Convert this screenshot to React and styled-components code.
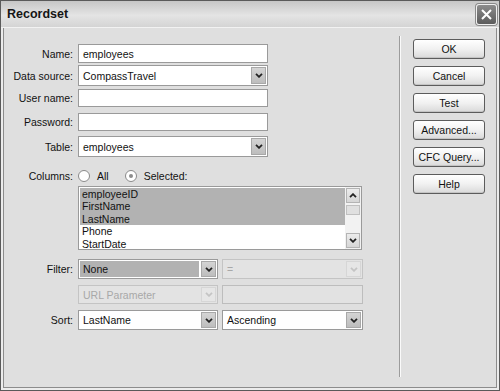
import React from 'react';
import styled, { createGlobalStyle } from 'styled-components';

const Global = createGlobalStyle`
  html, body {
    margin: 0;
    padding: 0;
    background: #fff;
  }
  body {
    font-family: "Liberation Sans", Arial, sans-serif;
    font-size: 10.5px;
    color: #111;
  }
  * { box-sizing: border-box; }
`;

const Window = styled.div`
  width: 500px;
  height: 391px;
  border: 1px solid #5a5a5a;
  display: flex;
  flex-direction: column;
  background: #dfdfdf;
  overflow: hidden;
`;

const TitleBar = styled.div`
  height: 27px;
  flex: none;
  display: flex;
  align-items: center;
  justify-content: space-between;
  padding: 0 2px 0 6px;
  background: linear-gradient(#c6c6c6, #e4e4e4 55%, #d4d4d4);
  border-bottom: 1px solid #f2f2f2;
`;

const Title = styled.div`
  font-weight: bold;
  font-size: 12.5px;
  color: #151515;
`;

const CloseButton = styled.div`
  width: 21px;
  height: 21px;
  border-radius: 3px;
  border: 1px solid #f0f0f0;
  box-shadow: 0 0 0 1px #8a8a8a;
  background: linear-gradient(#8c8c8c, #5c5c5c);
  display: flex;
  align-items: center;
  justify-content: center;
`;

const Frame = styled.div`
  flex: 1;
  display: flex;
  border: solid #ececec;
  border-width: 0 2px 2px;
  box-shadow: inset 1px 0 #8c8c8c, inset -1px 0 #8c8c8c, inset 0 -1px #8c8c8c;
  padding-left: 5px;
`;

const Form = styled.div`
  width: 355px;
  display: flex;
  flex-direction: column;
  padding-top: 16px;
`;

const Row = styled.div`
  display: flex;
  align-items: ${p => (p.$top ? 'flex-start' : 'center')};
  gap: 5px;
  height: ${p => p.$h}px;
  margin-top: ${p => p.$mt || 0}px;
`;

const Label = styled.div`
  width: 65px;
  flex: none;
  text-align: right;
  white-space: nowrap;
`;

const Controls = styled.div`
  display: flex;
  gap: 4px;
  height: 100%;
`;

const Field = styled.div`
  width: ${p => p.$w}px;
  height: 100%;
  border: 1px solid ${p => (p.$disabled ? '#bdbdbd' : '#9a9a9a')};
  background: ${p => (p.$disabled ? '#e2e2e2' : '#fff')};
  display: flex;
  align-items: center;
  padding: 0 4px;
`;

const SelectBox = styled.div`
  width: ${p => p.$w}px;
  height: 100%;
  display: flex;
  border: 1px solid ${p => (p.$disabled ? '#c4c4c4' : '#9a9a9a')};
  background: ${p => (p.$disabled ? '#e3e3e3' : '#fff')};
  color: ${p => (p.$disabled ? '#a8a8a8' : '#111')};
`;

const SelectText = styled.div`
  flex: 1;
  display: flex;
  align-items: center;
  padding: 0 3px;
  margin: 1px;
  background: ${p => (p.$selected ? '#b2b2b2' : 'transparent')};
`;

const SelectButton = styled.div`
  width: 15px;
  margin: 1px;
  flex: none;
  display: flex;
  align-items: center;
  justify-content: center;
  border: 1px solid ${p => (p.$disabled ? '#d6d6d6' : '#a8a8a8')};
  background: ${p => (p.$disabled ? '#e6e6e6' : 'linear-gradient(#d4d4d4, #bdbdbd)')};
  color: ${p => (p.$disabled ? '#c4c4c4' : '#222')};
`;

const RadioGroup = styled.div`
  display: flex;
  align-items: center;
  gap: 16px;
`;

const Option = styled.div`
  display: flex;
  align-items: center;
  gap: 7px;
`;

const Radio = styled.div`
  width: 12px;
  height: 12px;
  border-radius: 50%;
  border: 1px solid #8a8a8a;
  background: #fff;
  display: flex;
  align-items: center;
  justify-content: center;
  &::after {
    content: '';
    display: ${p => (p.$checked ? 'block' : 'none')};
    width: 4px;
    height: 4px;
    border-radius: 50%;
    background: #8c8c8c;
  }
`;

const ListBox = styled.div`
  width: 284px;
  height: 64px;
  margin-left: 70px;
  margin-top: 2px;
  border: 1px solid #9a9a9a;
  background: #fff;
  display: flex;
`;

const Items = styled.div`
  flex: 1;
  padding: 1px 0 0 1px;
`;

const Item = styled.div`
  height: 12.4px;
  line-height: 12.4px;
  padding-left: 2px;
  background: ${p => (p.$selected ? '#b2b2b2' : 'transparent')};
`;

const ScrollBar = styled.div`
  width: 16px;
  display: flex;
  flex-direction: column;
  background: #f2f2f2;
  padding: 1px;
`;

const ScrollArrow = styled.div`
  height: 15px;
  border: 1px solid #b4b4b4;
  background: linear-gradient(#ececec, #d6d6d6);
  display: flex;
  align-items: center;
  justify-content: center;
  color: #222;
`;

const Thumb = styled.div`
  height: 10px;
  margin-top: 2px;
  border: 1px solid #c0c0c0;
  background: #e0e0e0;
`;

const Track = styled.div`
  flex: 1;
`;

const Separator = styled.div`
  width: 2px;
  border-left: 1px solid #9c9c9c;
  border-right: 1px solid #fafafa;
  margin: 8px 0 11px 36px;
`;

const ButtonColumn = styled.div`
  margin-left: 12px;
  padding-top: 11px;
  display: flex;
  flex-direction: column;
  gap: 7px;
`;

const Button = styled.div`
  width: 72px;
  height: 20px;
  border: 1px solid #5c5c5c;
  border-radius: 3px;
  background: linear-gradient(#ffffff, #f1f1f1 50%, #d9d9d9);
  box-shadow: inset 0 -1px #c4c4c4;
  display: flex;
  align-items: center;
  justify-content: center;
`;

const Chevron = ({ up }) => (
  <svg width="8" height="5" viewBox="0 0 8 5">
    <polyline
      points={up ? '1,4.2 4,1.2 7,4.2' : '1,0.8 4,3.8 7,0.8'}
      fill="none"
      stroke="currentColor"
      strokeWidth="1.8"
    />
  </svg>
);

const Select = ({ w, value, disabled, selected }) => (
  <SelectBox $w={w} $disabled={disabled}>
    <SelectText $selected={selected}>{value}</SelectText>
    <SelectButton $disabled={disabled}>
      <Chevron />
    </SelectButton>
  </SelectBox>
);

const columns = [
  ['employeeID', true],
  ['FirstName', true],
  ['LastName', true],
  ['Phone', false],
  ['StartDate', false],
];

export default function App() {
  return (
    <>
      <Global />
      <Window>
        <TitleBar>
          <Title>Recordset</Title>
          <CloseButton>
            <svg width="13" height="13" viewBox="0 0 13 13">
              <path d="M2 2 L11 11 M11 2 L2 11" stroke="#fff" strokeWidth="2" />
            </svg>
          </CloseButton>
        </TitleBar>
        <Frame>
          <Form>
            <Row $h={19}>
              <Label>Name:</Label>
              <Field $w={190}>employees</Field>
            </Row>
            <Row $h={21} $mt={2}>
              <Label>Data source:</Label>
              <Select w={190} value="CompassTravel" />
            </Row>
            <Row $h={18} $mt={3}>
              <Label>User name:</Label>
              <Field $w={190} />
            </Row>
            <Row $h={18} $mt={6}>
              <Label>Password:</Label>
              <Field $w={190} />
            </Row>
            <Row $h={21} $mt={5}>
              <Label>Table:</Label>
              <Select w={190} value="employees" />
            </Row>
            <Row $h={16} $mt={11}>
              <Label>Columns:</Label>
              <RadioGroup>
                <Option>
                  <Radio />
                  All
                </Option>
                <Option>
                  <Radio $checked />
                  Selected:
                </Option>
              </RadioGroup>
            </Row>
            <ListBox>
              <Items>
                {columns.map(([name, sel]) => (
                  <Item key={name} $selected={sel}>{name}</Item>
                ))}
              </Items>
              <ScrollBar>
                <ScrollArrow><Chevron up /></ScrollArrow>
                <Thumb />
                <Track />
                <ScrollArrow><Chevron /></ScrollArrow>
              </ScrollBar>
            </ListBox>
            <Row $h={20} $mt={9}>
              <Label>Filter:</Label>
              <Controls>
                <Select w={140} value="None" selected />
                <Select w={141} value="=" disabled />
              </Controls>
            </Row>
            <Row $h={19} $mt={6}>
              <Label />
              <Controls>
                <Select w={140} value="URL Parameter" disabled />
                <Field $w={141} $disabled />
              </Controls>
            </Row>
            <Row $h={20} $mt={6}>
              <Label>Sort:</Label>
              <Controls>
                <Select w={140} value="LastName" />
                <Select w={141} value="Ascending" />
              </Controls>
            </Row>
          </Form>
          <Separator />
          <ButtonColumn>
            <Button>OK</Button>
            <Button>Cancel</Button>
            <Button>Test</Button>
            <Button>Advanced...</Button>
            <Button>CFC Query...</Button>
            <Button>Help</Button>
          </ButtonColumn>
        </Frame>
      </Window>
    </>
  );
}
